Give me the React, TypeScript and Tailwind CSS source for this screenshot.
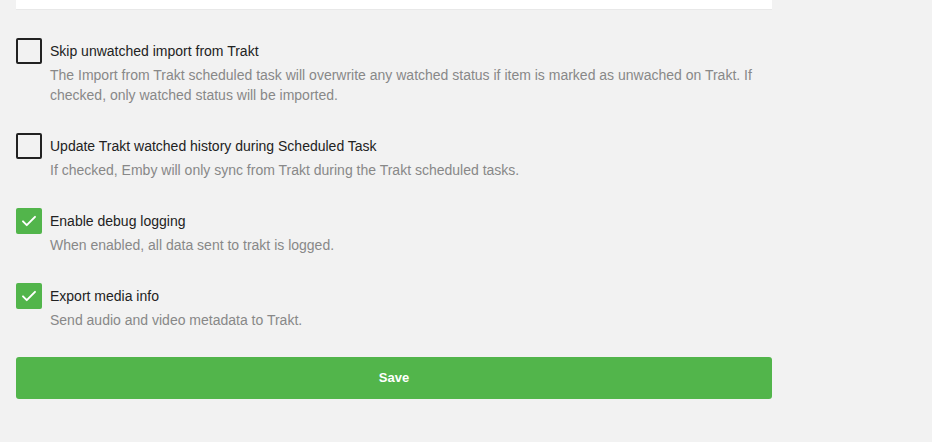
import React from "react";

type Option = {
  label: string;
  desc: string;
  checked: boolean;
};

const options: Option[] = [
  {
    label: "Skip unwatched import from Trakt",
    desc: "The Import from Trakt scheduled task will overwrite any watched status if item is marked as unwached on Trakt. If checked, only watched status will be imported.",
    checked: false,
  },
  {
    label: "Update Trakt watched history during Scheduled Task",
    desc: "If checked, Emby will only sync from Trakt during the Trakt scheduled tasks.",
    checked: false,
  },
  {
    label: "Enable debug logging",
    desc: "When enabled, all data sent to trakt is logged.",
    checked: true,
  },
  {
    label: "Export media info",
    desc: "Send audio and video metadata to Trakt.",
    checked: true,
  },
];

function CheckBox({ checked }: { checked: boolean }) {
  if (checked) {
    return (
      <div className="w-[26px] h-[26px] rounded-[2px] bg-[#52b54b] flex justify-center items-center shrink-0">
        <svg width="18" height="18" viewBox="0 0 24 24" fill="none">
          <path
            d="M4 12.5l5 5L20 6.5"
            stroke="#fff"
            strokeWidth="2.6"
            strokeLinecap="round"
            strokeLinejoin="round"
          />
        </svg>
      </div>
    );
  }
  return (
    <div className="w-[26px] h-[26px] rounded-[2px] border-2 border-[#222] shrink-0" />
  );
}

export default function App() {
  return (
    <div
      className="w-full min-h-[442px] bg-[#f2f2f2] px-4"
      style={{ fontFamily: '"Liberation Sans", Arial, sans-serif' }}
    >
      <div className="w-[756px]">
        <div className="h-[10px] bg-white border-b border-[#e8e8e8]" />

        <div className="pt-[28px] flex flex-col gap-[28px]">
          {options.map((o) => (
            <div key={o.label}>
              <div className="flex items-center gap-2 h-[26px]">
                <CheckBox checked={o.checked} />
                <p className="text-[14px] text-[#222]">{o.label}</p>
              </div>
              <p className="pl-[34px] pr-2 mt-[1px] text-[14px] leading-[20px] text-[#888]">
                {o.desc}
              </p>
            </div>
          ))}
        </div>

        <button className="w-full h-[42px] mt-[27px] rounded-[3px] bg-[#52b54b] text-white font-bold text-[13px]">
          Save
        </button>
      </div>
    </div>
  );
}
